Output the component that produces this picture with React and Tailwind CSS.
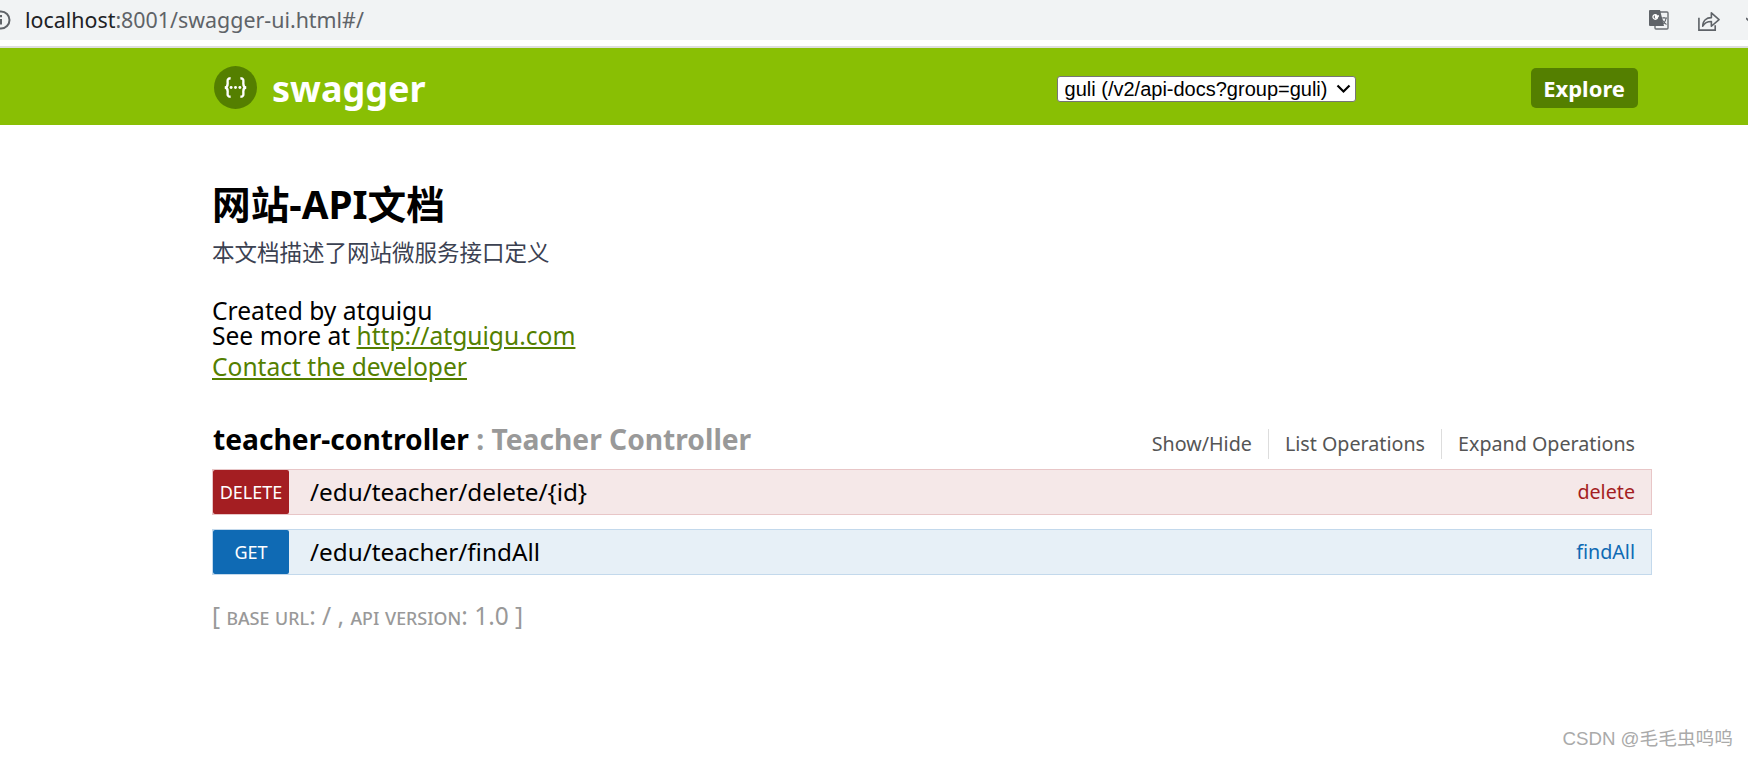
import React from "react";

const sans = "font-['Microsoft_YaHei','Noto_Sans','Noto_Sans_CJK_SC',sans-serif]";

function Row({ method, path, op, rowCls, badgeCls, opCls, mt, h }) {
  return (
    <div className={`flex items-stretch border ${rowCls} ${mt} ${h}`}>
      <div className={`w-[76px] rounded-[2px] flex items-center justify-center text-white text-[18px] ${badgeCls}`}>{method}</div>
      <div className="flex-1 flex items-center pl-[21px] text-[24.3px] text-black">{path}</div>
      <div className={`flex items-center pr-[16px] text-[19.7px] ${opCls}`}>{op}</div>
    </div>
  );
}

export default function App() {
  return (
    <div className={`relative h-[758px] overflow-hidden bg-white ${sans}`}>
      <div className="h-[40px] bg-[#f1f3f4] flex items-center">
        <svg className="ml-[-9px] w-[20px] h-[20px] shrink-0" viewBox="0 0 20 20" fill="none" stroke="#5f6368" strokeWidth="2">
          <circle cx="10" cy="10" r="8.500" />
          <path d="M10 9v5.500M10 5v2.200" />
        </svg>
        <div className="ml-[14px] text-[21.4px] text-[#5f6368]"><span className="text-[#202124]">localhost</span>:8001/swagger-ui.html#/</div>
        <div className="ml-auto flex items-center">
          <svg className="w-[20px] h-[22px]" viewBox="0 0 20 22">
            <rect x="6" y="3" width="13" height="17" rx="1" fill="#f1f3f4" stroke="#6b6f73" strokeWidth="1.4" />
            <path d="M0 2a1 1 0 0 1 1-1h10l4 16H1a1 1 0 0 1-1-1z" fill="#5f6368" />
            <path d="M10 7H6.500v1.500H8.500a2.300 2.300 0 1 1-.7-2.300" fill="none" stroke="#fff" strokeWidth="1.300" />
            <path d="M12 9h6M15 8v1.500M17 9.500c-.5 3-2.500 5-4.500 6M13 10.500c1 2 2.500 4 4.500 5" fill="none" stroke="#5f6368" strokeWidth="1.100" />
          </svg>
          <svg className="ml-[28px] w-[23px] h-[23px]" viewBox="0 0 24 24" fill="none" stroke="#5f6368" strokeWidth="1.700">
            <path d="M2 9v13h17v-5" />
            <path d="M6 18c0-6 4-9 9-9V4l8 7-8 7v-5c-4 0-7 1-9 5z" strokeLinejoin="round" />
          </svg>
          <svg className="ml-[26px] w-[6px] h-[6px] mr-[-4px]" viewBox="0 0 6 6" fill="none" stroke="#5f6368" strokeWidth="1.600">
            <path d="M0 1l3 3 3-3" />
          </svg>
        </div>
      </div>
      <div className="h-[6px] bg-white" />
      <div className="h-[2px] bg-[#dedede]" />

      <header className="h-[77px] bg-[#89bf04] flex items-center pl-[214px]">
        <svg className="w-[43px] h-[43px] shrink-0 mt-[2px]" viewBox="0 0 44 44">
          <circle cx="22" cy="22" r="22" fill="#547f00" />
          <path d="M17 12.500c-4 0-3 3-3 5.500 0 2.500-1 4-3 4 2 0 3 1.500 3 4 0 2.500-1 5.500 3 5.500M27 12.500c4 0 3 3 3 5.500 0 2.500 1 4 3 4-2 0-3 1.500-3 4 0 2.500 1 5.500-3 5.500" fill="none" stroke="#fff" strokeWidth="2.400" />
          <circle cx="17.500" cy="22" r="1.500" fill="#fff" />
          <circle cx="22" cy="22" r="1.500" fill="#fff" />
          <circle cx="26.500" cy="22" r="1.500" fill="#fff" />
        </svg>
        <div className="ml-[15px] mt-[4px] text-[36px] font-bold text-white leading-none">swagger</div>
        <div className="relative ml-[631px] mt-[4px] w-[299px] h-[26px]">
          <select className="w-full h-full appearance-none pl-[7px] bg-white text-black border border-[#767676] rounded-[3px] text-[20px] leading-[24px] font-['Liberation_Sans',sans-serif]" defaultValue="guli">
            <option value="guli">guli (/v2/api-docs?group=guli)</option>
          </select>
          <svg className="absolute right-[5px] top-[8px] w-[15px] h-[10px] pointer-events-none" viewBox="0 0 15 10" fill="none" stroke="#000" strokeWidth="2.200">
            <path d="M1.500 1.500l6 6 6-6" />
          </svg>
        </div>
        <div className="ml-[175px] mt-[3px] w-[107px] h-[40px] rounded-[5px] bg-[#547f00] text-white text-[22px] font-bold flex items-center justify-center">Explore</div>
      </header>

      <main className="ml-[212px] w-[1440px]">
        <h1 className="mt-[54px] text-[38.7px] leading-[50px] font-bold text-black">网站-API文档</h1>
        <p className="mt-[9px] text-[22.5px] leading-[30px] text-[#3b4151]">本文档描述了网站微服务接口定义</p>
        <div className="mt-[30px] text-[24.6px] leading-[25px] text-black">
          <div>Created by atguigu</div>
          <div>See more at <a className="text-[#547f00] underline" href="#">http://atguigu.com</a></div>
          <div className="mt-[6px]"><a className="text-[#547f00] underline" href="#">Contact the developer</a></div>
        </div>

        <div className="mt-[40px] flex items-center justify-between h-[40px]">
          <div className="pl-[1px] text-[28.2px] font-bold text-black">teacher-controller <span className="text-[#999999]">: Teacher Controller</span></div>
          <div className="flex items-center text-[19.7px] text-[#555555] mt-[10px] pr-[17px]">
            <span className="pr-[16px] border-r border-[#dddddd]">Show/Hide</span>
            <span className="px-[16px] border-r border-[#dddddd]">List Operations</span>
            <span className="pl-[16px]">Expand Operations</span>
          </div>
        </div>

        <Row method="DELETE" path="/edu/teacher/delete/{id}" op="delete" mt="mt-[10px]" h="h-[46px]" rowCls="bg-[#f5e8e8] border-[#e8c6c7]" badgeCls="bg-[#a41e22]" opCls="text-[#a41e22]" />
        <Row method="GET" path="/edu/teacher/findAll" op="findAll" mt="mt-[14px]" h="h-[46px]" rowCls="bg-[#e7f0f7] border-[#c3d9ec]" badgeCls="bg-[#0f6ab4]" opCls="text-[#0f6ab4]" />

        <div className="mt-[25px] text-[24.5px] leading-[32px] text-[#999999]">
          [ <span className="text-[22px] [font-variant:small-caps]">base url</span>: / , <span className="text-[22px] [font-variant:small-caps]">api version</span>: 1.0 ]
        </div>
      </main>

      <div className="absolute right-[15px] bottom-[5px] text-[18.7px] text-[#aaaaaa] font-['Liberation_Sans','Noto_Sans_CJK_SC',sans-serif]">CSDN @毛毛虫呜呜</div>
    </div>
  );
}
